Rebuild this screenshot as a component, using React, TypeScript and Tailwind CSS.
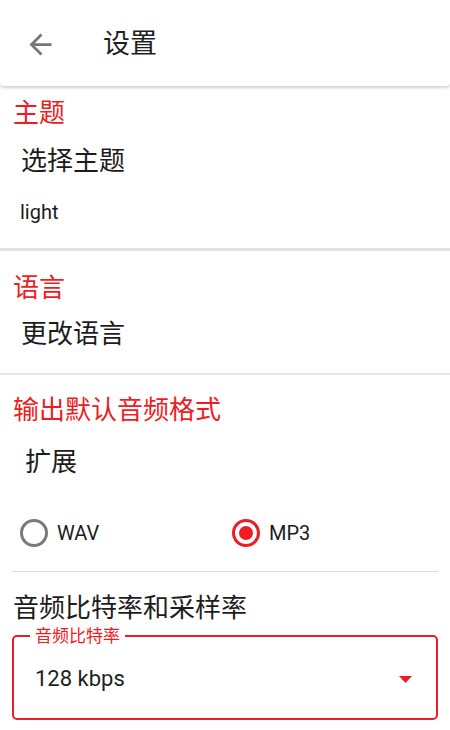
import { ReactElement } from 'react';

const RED = 'text-[#ef1c24]';

const Radio = ({ checked, label }: { checked?: boolean; label: string }): ReactElement => (
  <div className="flex items-center gap-[9px]">
    {checked ? (
      <span className="w-[28px] h-[28px] rounded-full border-[3px] border-[#ef1c24] flex items-center justify-center">
        <span className="w-[14px] h-[14px] rounded-full bg-[#ef1c24]" />
      </span>
    ) : (
      <span className="w-[28px] h-[28px] rounded-full border-[3px] border-[#7a7a7a]" />
    )}
    <span className="text-[20px] leading-[32px] text-[#1c1c1c]">{label}</span>
  </div>
);

export default function App(): ReactElement {
  return (
    <div
      className="w-[450px] h-[730px] bg-white overflow-hidden"
      style={{ fontFamily: 'Roboto, "Noto Sans CJK SC", sans-serif' }}
    >
      {/* top bar */}
      <div className="h-[86px] pt-[2px] flex items-center bg-white rounded-b-[4px] shadow-[0_2px_3px_rgba(0,0,0,0.18)] relative z-10">
        <svg width="33" height="33" viewBox="0 0 24 24" className="ml-[24px]">
          <path
            d="M20 11H7.83l5.59-5.59L12 4l-8 8 8 8 1.41-1.41L7.83 13H20v-2z"
            fill="#767676"
          />
        </svg>
        <span className="ml-[46px] text-[27px] leading-[34px] text-[#1e1e1e]">设置</span>
      </div>

      {/* theme */}
      <div className={`mt-[11px] ml-[13px] text-[26px] leading-[32px] ${RED}`}>主题</div>
      <div className="mt-[16px] ml-[21px] text-[26px] leading-[32px] text-[#1c1c1c]">选择主题</div>
      <div className="mt-[23px] ml-[20px] text-[20px] leading-[24px] text-[#1c1c1c]">light</div>
      <div className="mt-[24px] h-[3px] bg-[#e2e2e2]" />

      {/* language */}
      <div className={`mt-[21px] ml-[13px] text-[26px] leading-[32px] ${RED}`}>语言</div>
      <div className="mt-[14px] ml-[21px] text-[26px] leading-[32px] text-[#1c1c1c]">更改语言</div>
      <div className="mt-[23px] h-[2px] bg-[#e8e8e8]" />

      {/* output format */}
      <div className={`mt-[19px] ml-[13px] text-[26px] leading-[32px] ${RED}`}>输出默认音频格式</div>
      <div className="mt-[20px] ml-[25px] text-[26px] leading-[32px] text-[#1c1c1c]">扩展</div>
      <div className="mt-[39px] h-[32px] flex items-center pl-[20px]">
        <div className="w-[212px]">
          <Radio label="WAV" />
        </div>
        <Radio checked label="MP3" />
      </div>
      <div className="mt-[22px] mx-[12px] h-[1px] bg-[#dcdcdc]" />

      <div className="mt-[20px] ml-[13px] text-[26px] leading-[32px] text-[#1c1c1c]">音频比特率和采样率</div>

      <fieldset className="mt-[3px] mx-[12px] border-2 border-[#ef1c24] rounded-[5px] pl-[16px] pr-[24px]">
        <legend className={`px-[5px] text-[17px] leading-[18px] ${RED}`}>音频比特率</legend>
        <div className="h-[73px] pb-[5px] flex items-center justify-between">
          <span className="ml-[5px] text-[22px] leading-[28px] text-[#1e1e1e]">128 kbps</span>
          <svg width="13" height="7" viewBox="0 0 13 7">
            <path d="M0 0H13L6.5 7Z" fill="#ef1c24" />
          </svg>
        </div>
      </fieldset>
    </div>
  );
}
